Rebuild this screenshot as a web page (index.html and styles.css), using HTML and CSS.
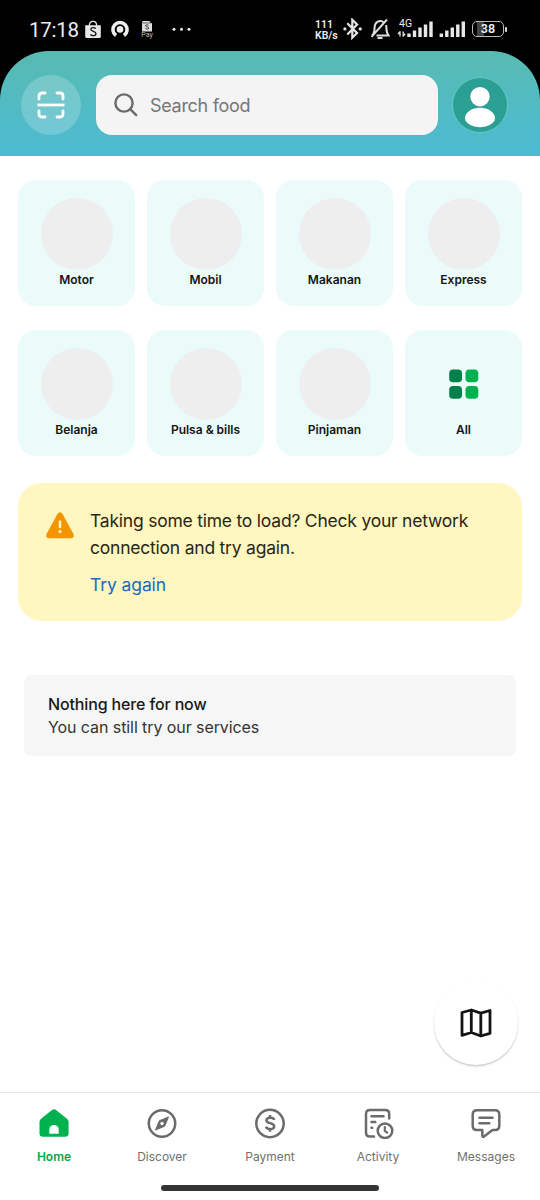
FILE: index.html
```html
<!DOCTYPE html>
<html lang="en">
<head>
<meta charset="utf-8">
<title>Home</title>
<link rel="stylesheet" href="styles.css">
</head>
<body>
<div class="screen">
  <div class="top">
    <div class="status">
      <span class="clock">17:18</span>
      <svg class="st-bag" width="18" height="24" viewBox="84 18 18 24"><path d="M85.2 25.300h15.600v11.200q0 1.500-1.500 1.500H86.700q-1.500 0-1.500-1.500z" fill="#e8e8e8"/><path d="M89.300 26c0-6.200 7.400-6.200 7.400 0" fill="none" stroke="#e8e8e8" stroke-width="1.300"/><path d="M95.800 28.500c-1.500-1.300-5-1.500-5 .8 0 2.500 5.200 1.800 5.200 4.400 0 2.400-3.900 2.400-5.700.8" fill="none" stroke="#111" stroke-width="1.300"/></svg>
      <svg class="st-ring" width="20" height="24" viewBox="110 18 20 24"><path d="M116 35.400a7.100 7.100 0 1 1 8 0" fill="none" stroke="#eee" stroke-width="3.600"/><circle cx="120" cy="29.400" r="3.300" fill="#eee"/></svg>
      <span class="pay"><svg width="12" height="11" viewBox="0 0 12 11"><path d="M1.500 0h7l1 2h1.500v8.500H1V2.500z" fill="#ddd"/><path d="M1.500 2h9" stroke="#333" stroke-width=".7"/><path d="M7.500 4.300c-1.600-1-3.400-.3-2.800.8.500 1 3 .6 3 2 0 1.200-2 1.200-3.200.4" fill="none" stroke="#222" stroke-width=".9"/></svg><span>Pay</span></span>
      <svg class="st-dots" width="20" height="24" viewBox="172 18 20 24" fill="#eee"><circle cx="174" cy="29.300" r="1.500"/><circle cx="181.500" cy="29.300" r="1.500"/><circle cx="189" cy="29.300" r="1.500"/></svg>
      <span class="speed">111<br>KB/s</span>
      <svg class="st-bt" width="20" height="24" viewBox="343 18 20 24" fill="none" stroke="#e5e5e5" stroke-width="2.200"><path d="M347.300 23.300l9.800 9.800-4.800 4.600V19.800l4.800 4.700-9.800 10"/><circle cx="344.900" cy="28.900" r="1.600" fill="#e5e5e5" stroke="none"/><circle cx="360.200" cy="28.900" r="1.600" fill="#e5e5e5" stroke="none"/></svg>
      <svg class="st-bell" width="20" height="24" viewBox="370 18 20 24" fill="none" stroke="#ddd" stroke-width="2"><path d="M387 19.500l-15.500 17.300M372 35.500c2.500-2 2.300-3.500 2.600-8.500.4-5.500 5-7.200 8.800-5M386.200 25c.4 5.500-.1 7.500 2.300 10.400H376.500"/><path d="M377.500 38h5" stroke-width="2"/></svg>
      <span class="cell"><span class="gen">4G</span><svg width="36" height="24" viewBox="397 18 36 24"><path d="M400 31.300v5.200M398 34l2-2.200M403.200 31.500v5.200M403.200 36l2-2.200" fill="none" stroke="#ddd" stroke-width="1.400"/><path d="M409 33.500v3.600M414.500 30.500v6.600M420 27.500v9.600M425.500 24.500v12.600M431 21.500v15.600" stroke="#e8e8e8" stroke-width="3.400" stroke-linecap="butt"/></svg></span>
      <svg class="st-sig" width="27" height="24" viewBox="439 18 27 24"><path d="M441.300 33.500v3.600M446.800 30.500v6.600M452.300 27.500v9.600M457.800 24.500v12.600M463.300 21.500v15.600" stroke="#e8e8e8" stroke-width="3.400"/></svg>
      <span class="battery"><span class="cellbox">38</span><i></i></span>
    </div>
    <header class="header">
      <div class="scan"><svg width="28" height="28" viewBox="0 0 28 28" fill="none" stroke="#fff" stroke-width="2.800" stroke-linecap="round"><path d="M2 8V5q0-3 3-3h3M20 2h3q3 0 3 3v3M26 20v3q0 3-3 3h-3M8 26H5q-3 0-3-3v-3"/><path d="M.5 14h27" stroke-linecap="butt"/></svg></div>
      <div class="search"><svg width="24" height="24" viewBox="0 0 24 24" fill="none" stroke="#6b6b6b" stroke-width="2.400" stroke-linecap="round"><circle cx="10" cy="10" r="8.600"/><path d="M16.200 16.200l6 6"/></svg><span>Search food</span></div>
      <div class="avatar"><svg width="54" height="54" viewBox="0 0 54 54" fill="#fff"><circle cx="27" cy="18.700" r="9.700"/><path d="M12 40.500c0-6 6.500-10.800 15-10.800s15 4.800 15 10.800c0 4.500-7.500 8.800-15 8.800s-15-4.300-15-8.800z"/></svg></div>
    </header>
  </div>
  <main class="main">
    <div class="grid">
      <div class="tile"><i class="ph"></i><b>Motor</b></div>
      <div class="tile"><i class="ph"></i><b>Mobil</b></div>
      <div class="tile"><i class="ph"></i><b>Makanan</b></div>
      <div class="tile"><i class="ph"></i><b>Express</b></div>
      <div class="tile"><i class="ph"></i><b>Belanja</b></div>
      <div class="tile"><i class="ph"></i><b>Pulsa &amp; bills</b></div>
      <div class="tile"><i class="ph"></i><b>Pinjaman</b></div>
      <div class="tile"><svg width="72" height="72" viewBox="0 0 72 72"><rect x="21.200" y="21.500" width="12.800" height="12.800" rx="3.800" fill="#04804b"/><rect x="21.200" y="37.900" width="12.800" height="12.800" rx="3.800" fill="#04804b"/><rect x="37.500" y="21.500" width="12.800" height="12.800" rx="3.800" fill="#00b14f"/><rect x="37.500" y="37.900" width="12.800" height="12.800" rx="3.800" fill="#00b14f"/></svg><b>All</b></div>
    </div>
    <section class="warn">
      <svg width="28" height="28" viewBox="0 0 28 28"><path d="M11.300 2.200Q14-1.800 16.700 2.200L27.200 21.500Q29 26 24.800 26.200H3.200Q-1 26 .8 21.500z" fill="#f29500"/><path d="M14 8.500v7.600" stroke="#fff6c0" stroke-width="2.400"/><circle cx="14" cy="19.600" r="1.600" fill="#fff6c0"/></svg>
      <div><p>Taking some time to load? Check your network<br>connection and try again.</p><a class="retry">Try again</a></div>
    </section>
    <section class="empty"><p class="empty-title">Nothing here for now</p><p class="empty-sub">You can still try our services</p></section>
    <div class="fab"><svg width="32" height="30" viewBox="0 0 32 30" fill="none" stroke="#141414" stroke-width="2.800" stroke-linejoin="round"><path d="M2 4.500L11.300 2l9.500 3.200L30 2.500v22.800L20.800 28l-9.500-3.500L2 27.300zM11.300 2v22.500M20.800 5.200V28"/></svg></div>
  </main>
  <nav class="nav">
    <div class="tab active"><svg width="32" height="32" viewBox="0 0 32 32"><path d="M14 3q2-1.400 4 0l11 8.800q1.600 1.400 1.600 3.500v11q0 3.500-3.500 3.500H5q-3.500 0-3.500-3.500v-11q0-2.100 1.600-3.500z" fill="#00b14f"/><path d="M11.300 26.800v-4.300c0-6 9.400-6 9.400 0v4.300z" fill="#fff"/></svg><span>Home</span></div>
    <div class="tab"><svg width="32" height="32" viewBox="0 0 32 32" fill="none" stroke="#6b6b6b" stroke-width="2.500"><circle cx="16" cy="16.500" r="13.200"/><path d="M22.500 10l-3.800 9.200L9.500 23l3.800-9.200z" fill="#6b6b6b" stroke-width="1"/><circle cx="16" cy="16.500" r="1.700" fill="#fff" stroke="none"/></svg><span>Discover</span></div>
    <div class="tab"><svg width="32" height="32" viewBox="0 0 32 32" fill="none" stroke="#6b6b6b" stroke-width="2.500"><circle cx="16" cy="16.500" r="13.700"/><path d="M20.300 12.800c-.6-2.200-7.900-3.200-7.900.4 0 4 7.800 1.900 7.800 6.300 0 3.700-7.300 3.400-8.200.1M16 8v3M16 21.800v3"/></svg><span>Payment</span></div>
    <div class="tab"><svg width="32" height="32" viewBox="0 0 32 32" fill="none" stroke="#6b6b6b" stroke-width="2.500" stroke-linecap="round"><path d="M27.200 11.500V7q0-4-4-4H8Q4 3 4 7v18.500q0 4 4 4h4"/><path d="M9.500 9.200h12M9.500 15h3.800M9.500 20.800h.6"/><circle cx="23" cy="23.700" r="7.300"/><path d="M22.800 20v4l2.400 1.600" stroke-width="2.200"/></svg><span>Activity</span></div>
    <div class="tab"><svg width="32" height="32" viewBox="0 0 32 32" fill="none" stroke="#6b6b6b" stroke-width="2.500" stroke-linejoin="round" stroke-linecap="round"><path d="M7 3.300h18q4.300 0 4.300 4.300v11.200q0 4.300-4.300 4.300h-2.500L14 29.500q-1.700.8-1.700-1v-5.400H7q-4.300 0-4.300-4.300V7.600Q2.700 3.300 7 3.300z"/><path d="M9.500 10.700h13M9.500 16.300h9.800"/></svg><span>Messages</span></div>
  </nav>
  <div class="gesture"></div>
</div>
</body>
</html>
```
FILE: styles.css
```css
* { box-sizing: border-box; }
body { margin: 0; background: #fff; font-family: Inter, "Liberation Sans", sans-serif; }
p { margin: 0; }
svg { display: block; flex: none; }
.screen { width: 540px; height: 1200px; display: flex; flex-direction: column; overflow: hidden; background: #fff; }
.top { background: #000; flex: none; }
.status { height: 51px; padding: 18px 0 0 29px; display: flex; align-items: flex-start; color: #eee; font-family: Roboto, sans-serif; }
.status > * { flex: none; }
.clock { width: 55px; font-size: 20.5px; line-height: 24px; letter-spacing: -.25px; }
.st-ring { margin-left: 8px; }
.pay { width: 14px; margin: 3px 0 0 10px; display: flex; flex-direction: column; align-items: center; font-size: 7px; line-height: 7px; color: #bbb; }
.st-dots { margin-left: 18px; }
.speed { width: 28px; margin: 1px 0 0 123px; font-size: 10.500px; line-height: 11px; font-weight: 600; letter-spacing: 0; }
.st-bell { margin-left: 7px; }
.cell { position: relative; margin-left: 7px; }
.gen { position: absolute; left: 2px; top: 1px; font-size: 10.500px; line-height: 10px; }
.st-sig { margin-left: 6px; }
.battery { display: flex; align-items: center; margin: 3px 0 0 6px; }
.cellbox { width: 32px; height: 16px; border: 1.500px solid #bbb; border-radius: 5px; font-size: 12.500px; line-height: 14px; text-align: center; font-weight: 600; background: linear-gradient(90deg, transparent 4px, #444 4px, #444 11px, transparent 11px); }
.battery i { width: 2px; height: 5px; margin-left: 1px; background: #ddd; border-radius: 1px; }
.header { height: 105px; padding: 24px 31px 0 21px; display: flex; border-radius: 49px 49px 0 0; background: linear-gradient(#58bbb1, #4cbbd3); }
.scan { width: 60px; height: 60px; border-radius: 50%; background: rgba(255,255,255,.2); display: flex; align-items: center; justify-content: center; }
.search { width: 342px; height: 60px; margin: 0 14px 0 15px; padding-left: 18px; border-radius: 16px; background: #f4f4f4; display: flex; align-items: center; gap: 12px; color: #767676; font-size: 18px; letter-spacing: -.3px; }
.avatar { width: 56px; height: 56px; margin-top: 2px; border: 1.500px solid #63cbc5; border-radius: 50%; background: #2c9f94; display: flex; align-items: center; justify-content: center; }
.main { flex: 1; padding: 24px 18px 0; display: flex; flex-direction: column; }
.grid { display: grid; grid-template-columns: repeat(4, 117px); gap: 24px 12px; }
.tile { height: 126px; padding-top: 18px; border-radius: 18px; background: #ebfbfa; display: flex; flex-direction: column; align-items: center; }
.ph { width: 72px; height: 72px; border-radius: 50%; background: #eee; }
.tile b { padding-top: 1px; font-size: 12px; line-height: 18px; font-weight: 600; color: #141414; letter-spacing: 0; }
.warn { height: 138px; margin-top: 27px; padding: 24px 28px; border-radius: 24px; background: #fff6c0; display: flex; gap: 16px; font-size: 17.500px; line-height: 27px; letter-spacing: -.22px; color: #292714; }
.warn svg { margin-top: 5px; }
.retry { display: block; margin-top: 10px; letter-spacing: -.1px; color: #1769c4; }
.empty { height: 81px; margin: 54px 6px 0; padding: 18px 24px; border-radius: 7px; background: #f6f6f6; font-size: 16px; line-height: 23px; letter-spacing: -.08px; color: #333; }
.empty-title { color: #181818; font-weight: 500; letter-spacing: -.14px; }
.fab { width: 84px; height: 84px; margin: auto 4px 27px auto; border-radius: 50%; background: #fff; box-shadow: 0 1.500px 2px rgba(0,0,0,.2); display: flex; align-items: center; justify-content: center; }
.nav { height: 92px; flex: none; border-top: 1px solid #dfe9e8; display: grid; grid-template-columns: repeat(5, 1fr); }
.tab { padding-top: 14px; display: flex; flex-direction: column; align-items: center; font-size: 12px; line-height: 18px; color: #707070; letter-spacing: 0; }
.tab span { margin-top: 9px; }
.active { color: #00a84b; font-weight: 600; }
.gesture { width: 218px; height: 6px; margin: 1px auto 9px; border-radius: 3px; background: #333; flex: none; }
```
